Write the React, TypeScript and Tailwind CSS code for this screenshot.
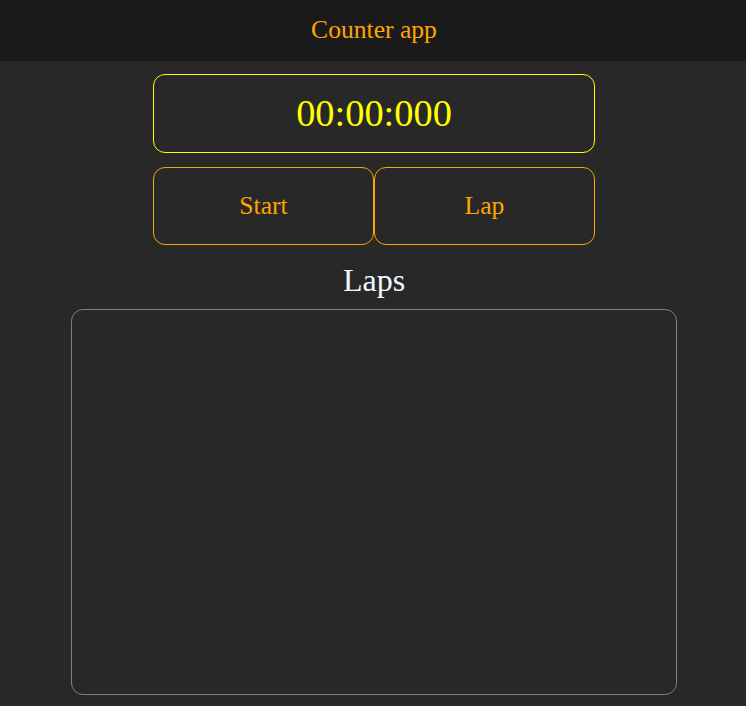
export default function App() {
  const serif = { fontFamily: '"Liberation Serif", "Times New Roman", serif' };
  return (
    <div className="min-h-[706px] bg-[#282828] flex flex-col items-center pl-[2px]" style={serif}>
      <header className="w-[calc(100%+2px)] -ml-[2px] pl-[2px] h-[61px] bg-[#1a1a1a] flex items-center justify-center">
        <span className="text-[25.6px] text-[#ffa500] leading-none -mt-[2px]">Counter app</span>
      </header>
      <div className="mt-[13px] w-[442px] h-[79px] border border-[#ffff00] rounded-[12px] flex items-center justify-center">
        <span className="text-[38.4px] text-[#ffff00] leading-none">00:00:000</span>
      </div>
      <div className="mt-[14px] w-[442px] h-[78px] flex">
        <button className="w-[221px] h-full border border-[#ffa500] rounded-[12px] text-[25.6px] text-[#ffa500] bg-transparent">
          Start
        </button>
        <button className="w-[221px] h-full border border-[#ffa500] rounded-[12px] text-[25.6px] text-[#ffa500] bg-transparent">
          Lap
        </button>
      </div>
      <h2 className="mt-[16px] mb-[11px] h-[37px] flex items-center text-[32px] text-[#f0f8ff] leading-none">Laps</h2>
      <div className="w-[606px] h-[386px] border border-[#808080] rounded-[12px]"></div>
    </div>
  );
}
